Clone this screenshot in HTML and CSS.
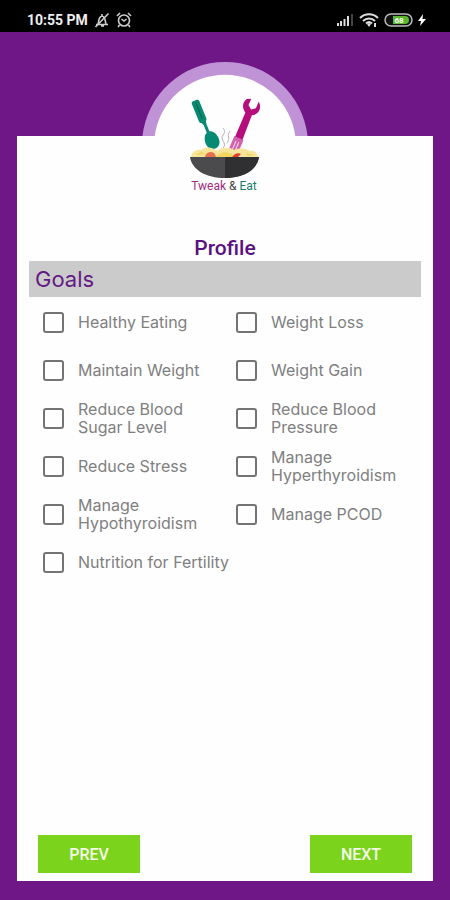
FILE: index.html
```html
<!DOCTYPE html>
<html lang="en">
<head>
  <meta charset="UTF-8">
  <meta name="viewport" content="width=device-width, initial-scale=1">
  <title>Profile - Tweak & Eat</title>
  <link rel="stylesheet" href="styles.css">
</head>
<body>
  <div class="status-bar">
    <span class="time">10:55 PM</span>
    <!-- Muted bell -->
    <svg width="16" height="16" viewBox="0 0 16 16" fill="none" stroke="#ccc" stroke-width="1.6">
      <path d="M2 12.500h12M4 12c1-2 0-7 4-8 4 1 3 6 4 8M7 14h3M8 4V2M14.500 1.500L1.500 15"/>
    </svg>
    <!-- Alarm clock -->
    <svg width="16" height="16" viewBox="0 0 16 16" fill="none" stroke="#ccc" stroke-width="1.6">
      <circle cx="8" cy="8.500" r="5.500"/>
      <path d="M1 4l3-3M15 4l-3-3M5.500 7L8 9l2.500-2M3.500 13L2 15M12.500 13l1.500 2"/>
    </svg>
    <div class="status-right">
      <!-- Signal -->
      <svg width="18" height="14" viewBox="0 0 18 14" fill="#ddd">
        <path d="M1 10h2v3H1zM4 8h2v5H4zM7.500 6h2v7h-2zM11 3h2v10h-2z"/>
        <path fill="#444" d="M15 1h2v12h-2z"/>
      </svg>
      <!-- Wifi -->
      <svg width="20" height="14" viewBox="0 0 20 14" fill="none" stroke="#ddd" stroke-width="2">
        <path d="M1 5c5-5 13-5 18 0M4 8c3.500-3.500 8.500-3.500 12 0M7 10.500c2-1.800 4-1.800 6 0"/>
        <path fill="#ddd" stroke="none" d="M8 11l2-1 2 1-2 3zM15 10h2v4h-2z"/>
      </svg>
      <!-- Battery -->
      <svg width="29" height="14" viewBox="0 0 29 14">
        <rect x="1" y="1" width="27" height="12" rx="6" fill="#111" stroke="#bbb" stroke-width="1.500"/>
        <path fill="#5cb82c" d="M9 3h12a4 4 0 0 1 0 8H9z"/>
        <text class="battery-text" x="15" y="10" text-anchor="middle">68</text>
      </svg>
      <svg width="8" height="12" viewBox="0 0 8 12" fill="#fff">
        <path d="M5 0L0 7h3l-1 5 6-7H4.500z"/>
      </svg>
    </div>
  </div>

  <main class="card">
    <svg class="logo" width="166" height="136" viewBox="0 0 166 136" role="img" aria-label="Tweak & Eat">
      <!-- Half ring -->
      <path fill="#bf93d6" d="M0.500 74A83 83 0 0 1 165.500 74z"/>
      <path fill="#fefefe" d="M12.600 74.500A71 71 0 0 1 153.400 74.500z"/>
      <!-- Screwdriver spoon -->
      <g transform="rotate(-22 62 64)" fill="#078a72">
        <rect x="59" y="37" width="8" height="23" rx="2"/>
        <path d="M60 59h6l-1 4v12h-3V63zM64 71c5 0 7 6 7 10s-2 8-7 8-7-4-7-8 2-10 7-10z"/>
        <path stroke="#04614f" d="M63 39v18"/>
      </g>
      <!-- Steam -->
      <path fill="none" stroke="#b9adb5" d="M81 86c5-5-4-8 0-13 3-4 1-5 0-7M85 81c4-5-1-7 3-12"/>
      <!-- Wrench fork -->
      <g transform="rotate(23 102 64)">
        <path fill="#b50d7c" d="M98 51c-5-3-7-8-4-13l4-2v7l4 3 4-3v-7c5 3 6 12-1 15l1 27h-8z"/>
        <path fill="#cf63ac" d="M97 77h10v13H97z"/>
        <path stroke="#f5d4e9" d="M100.500 81v10M103.500 81v10"/>
      </g>
      <!-- Food and bowl -->
      <path fill="#f6e59a" d="M49 96c0-5 4-9 10-8 5-4 12-3 16 1 5-4 13-4 17-1 6-2 12-2 15 1 6-1 9 2 9 7z"/>
      <path fill="#f2d65f" d="M74 96c1-4 8-7 13-5 4 1 5 3 5 5zM54 92l6-2 3 2-8 1zM104 91l8 2-6 1z"/>
      <path fill="#e8704e" d="M63 96c0-4 3-6 6-6s5 3 5 6z"/>
      <path fill="#df3d31" d="M90 96c1-4 6-6 9-4l-4 4z"/>
      <path fill="#4b4b4d" d="M48 95h69c-2 13-15 21-34 21S50 108 48 95z"/>
      <path fill="#303032" d="M83 95h34c-2 13-15 21-34 21z"/>
      <text class="logo-text" x="82" y="128" text-anchor="middle"><tspan fill="#a12c7b">Tweak</tspan> <tspan fill="#444">&amp;</tspan> <tspan fill="#1c7b6c">Eat</tspan></text>
    </svg>

    <h1>Profile</h1>
    <h2>Goals</h2>

    <form class="profile-form">
      <div class="goals">
        <label><input type="checkbox" name="goal"> Healthy Eating</label>
        <label><input type="checkbox" name="goal"> Weight Loss</label>
        <label><input type="checkbox" name="goal"> Maintain Weight</label>
        <label><input type="checkbox" name="goal"> Weight Gain</label>
        <label><input type="checkbox" name="goal"> Reduce Blood Sugar Level</label>
        <label><input type="checkbox" name="goal"> Reduce Blood Pressure</label>
        <label><input type="checkbox" name="goal"> Reduce Stress</label>
        <label><input type="checkbox" name="goal"> Manage Hyperthyroidism</label>
        <label><input type="checkbox" name="goal"> Manage Hypothyroidism</label>
        <label><input type="checkbox" name="goal"> Manage PCOD</label>
        <label class="wide"><input type="checkbox" name="goal"> Nutrition for Fertility</label>
      </div>

      <div class="buttons">
        <button type="button">PREV</button>
        <button type="button">NEXT</button>
      </div>
    </form>
  </main>
</body>
</html>
```

FILE: styles.css
```css
* {
  box-sizing: border-box;
}

body {
  margin: 0;
  min-height: 100vh;
  display: flex;
  flex-direction: column;
  background-color: #701787;
  font-family: Inter, "Liberation Sans", sans-serif;
}

/* Status bar */
.status-bar {
  display: flex;
  align-items: center;
  gap: 6px;
  height: 32px;
  padding: 8px 24px 0 27px;
  background-color: #000;
  color: #eee;
}

.time {
  font-family: Roboto, sans-serif;
  font-size: 14px;
  font-weight: 700;
}

.status-right {
  display: flex;
  align-items: center;
  gap: 5px;
  margin-left: auto;
}

.battery-text {
  font-family: Roboto, sans-serif;
  font-size: 8px;
  font-weight: 700;
  fill: #fff;
}

/* Card */
.card {
  flex: 1;
  display: flex;
  flex-direction: column;
  margin: 104px 17px 19px;
  padding: 0 12px 8px;
  background-color: #fefefe;
}

.logo {
  align-self: center;
  margin-top: -74px;
}

.logo-text {
  font-family: Roboto, sans-serif;
  font-size: 12px;
  font-weight: 400;
}

h1 {
  margin: 37px 0 0;
  color: #5a1080;
  font-family: Roboto, sans-serif;
  font-size: 21px;
  font-weight: 500;
  line-height: 26px;
  text-align: center;
}

h2 {
  margin: 0;
  padding: 0 6px;
  background-color: #cbcbcb;
  color: #641a86;
  font-size: 22px;
  font-weight: 400;
  line-height: 36px;
}

.profile-form {
  flex: 1;
  display: flex;
  flex-direction: column;
}

.goals {
  display: grid;
  grid-template-columns: 1fr 1fr;
  grid-auto-rows: minmax(48px, auto);
  column-gap: 8px;
  padding: 1px 0 0 14px;
}

.goals label {
  display: flex;
  align-items: center;
  gap: 14px;
  color: #808080;
  font-size: 16px;
  line-height: 18px;
}

.goals .wide {
  grid-column: span 2;
}

.goals input {
  appearance: none;
  flex: none;
  width: 21px;
  height: 21px;
  margin: 0;
  border: 2px solid #747474;
  border-radius: 3px;
}

.goals input:checked {
  background-color: #701787;
}

.buttons {
  display: flex;
  justify-content: space-between;
  margin-top: auto;
  padding: 0 9px;
}

button {
  width: 102px;
  height: 38px;
  border: none;
  background-color: #7bd31c;
  color: #f4fbe8;
  font-family: Roboto, sans-serif;
  font-size: 16px;
  font-weight: 500;
  cursor: pointer;
}
```
